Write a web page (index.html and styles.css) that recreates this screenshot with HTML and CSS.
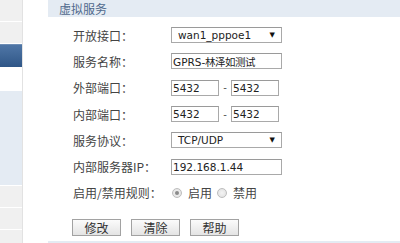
FILE: index.html
```html
<!DOCTYPE html>
<html lang="zh-CN">
<head>
  <meta charset="UTF-8" />
  <title>虚拟服务</title>
  <link rel="stylesheet" href="styles.css">
</head>
<body>

  <div id="sidebar">
    <div class="nav grey first"></div>
    <div class="nav grey"></div>
    <div class="nav active"></div>
    <div class="nav white"></div>
    <div class="nav sub"></div>
    <div class="nav grey"></div>
    <div class="nav grey"></div>
    <div class="nav grey last"></div>
  </div>

  <div id="main">
    <div class="title-bar">虚拟服务</div>

    <div class="form">
      <label>开放接口：</label>
      <div class="field">
        <div class="select wide">wan1_pppoe1<span class="arrow">▼</span></div>
      </div>

      <label>服务名称：</label>
      <div class="field"><input class="text wide" type="text" value="GPRS-林泽如测试"></div>

      <label>外部端口：</label>
      <div class="field">
        <input class="text port" type="text" value="5432">
        <span class="dash">-</span>
        <input class="text port" type="text" value="5432">
      </div>

      <label>内部端口：</label>
      <div class="field">
        <input class="text port" type="text" value="5432">
        <span class="dash">-</span>
        <input class="text port" type="text" value="5432">
      </div>

      <label>服务协议：</label>
      <div class="field">
        <div class="select wide">TCP/UDP<span class="arrow">▼</span></div>
      </div>

      <label>内部服务器IP：</label>
      <div class="field"><input class="text wide" type="text" value="192.168.1.44"></div>

      <label>启用/禁用规则：</label>
      <div class="field radios">
        <span class="radio checked"></span><span class="opt">启用</span>
        <span class="radio"></span><span class="opt">禁用</span>
      </div>
    </div>

    <div class="buttons">
      <button>修改</button>
      <button>清除</button>
      <button>帮助</button>
    </div>

    <div class="bottom-bar"></div>
  </div>

</body>
</html>
```

FILE: styles.css
```css
body {
  margin: 0;
  background-color: #ffffff;
  font-family: "Noto Sans CJK SC", sans-serif;
  font-size: 12px;
  color: #444;
  display: flex;
  height: 243px;
  overflow: hidden;
}
#sidebar {
  width: 22px;
  border-right: 1px solid #e2e2e2;
  display: flex;
  flex-direction: column;
  gap: 1px;
  background-color: #ffffff;
}
.nav {
  background-color: #f0f0f0;
}
.nav.first {
  height: 15px;
}
.nav.grey {
  height: 21px;
}
.nav.active {
  height: 23px;
  background: linear-gradient(#4f76a6, #2f5687);
  border-top: 1px solid #6d8db5;
  box-sizing: border-box;
}
.nav.white {
  height: 22px;
  background-color: #ffffff;
}
.nav.sub {
  height: 94px;
  background-color: #e4ebf3;
}
.nav.last {
  flex: 1;
}
#main {
  margin-left: 25px;
  flex: 1;
  display: flex;
  flex-direction: column;
}
.title-bar {
  height: 19px;
  line-height: 17px;
  padding-left: 11px;
  background-color: #e4ebf3;
  color: #50698c;
}
.form {
  display: grid;
  grid-template-columns: 98px auto;
  grid-auto-rows: 26.3px;
  align-items: center;
  padding: 5px 0 0 25px;
}
.form label {
  white-space: nowrap;
}
.field {
  display: flex;
  align-items: center;
}
.select, .text {
  box-sizing: border-box;
  height: 16px;
  border: 1px solid #a9a9a9;
  border-top-color: #9a9a9a;
  background-color: #ffffff;
  font-family: "DejaVu Sans", sans-serif;
  font-size: 10.5px;
  color: #222;
}
.select {
  position: relative;
  padding-left: 6px;
  line-height: 14px;
}
.arrow {
  position: absolute;
  right: 6px;
  top: 0;
  font-size: 7px;
  line-height: 14px;
  color: #111;
}
.wide {
  width: 111px;
}
.text {
  padding: 0 0 0 1px;
  margin: 0;
  outline: none;
}
.port {
  width: 48px;
}
.dash {
  width: 12px;
  text-align: center;
  font-family: "DejaVu Sans", sans-serif;
  font-size: 10px;
  color: #555;
}
.radios {
  padding-left: 1px;
}
.radio {
  box-sizing: border-box;
  width: 10px;
  height: 10px;
  border-radius: 50%;
  border: 1px solid #bdbdbd;
  background: radial-gradient(#f4f4f4, #dedede);
  display: flex;
  align-items: center;
  justify-content: center;
}
.radio.checked::after {
  content: "";
  width: 4px;
  height: 4px;
  border-radius: 50%;
  background-color: #8a8a8a;
}
.opt {
  margin: 0 5px 0 6px;
}
.buttons {
  display: flex;
  gap: 10px;
  padding-left: 24px;
  margin-top: 13px;
}
button {
  width: 49px;
  height: 17px;
  padding: 0;
  border: 1px solid #a2a2a2;
  background: linear-gradient(#fbfbfb, #e4e4e4);
  font-family: "Noto Sans CJK SC", sans-serif;
  font-size: 12px;
  line-height: 14px;
  color: #333;
}
.bottom-bar {
  margin-top: 5px;
  height: 4px;
  background-color: #e4ebf3;
}
```
